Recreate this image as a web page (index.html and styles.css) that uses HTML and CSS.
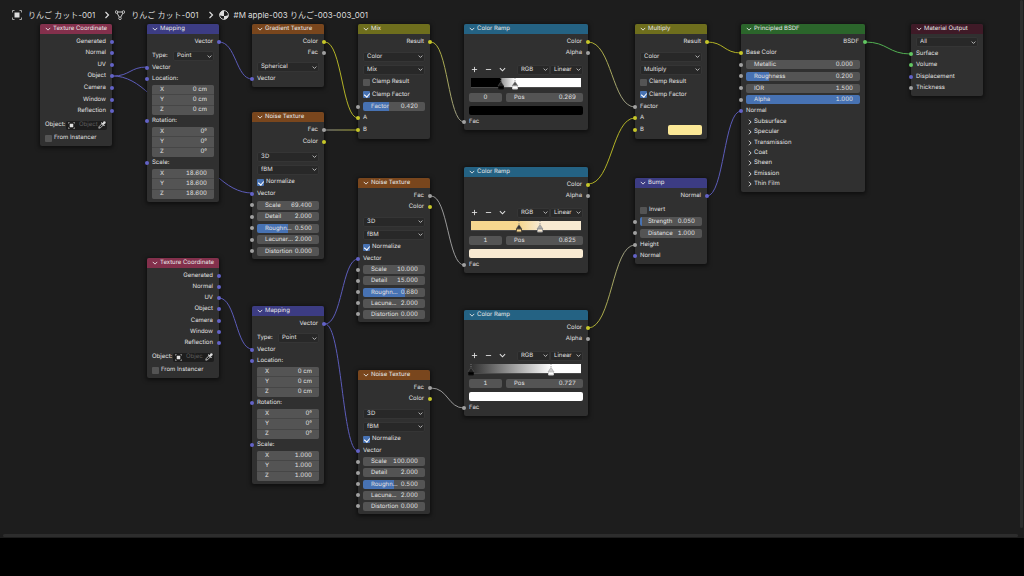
FILE: index.html
```html
<!DOCTYPE html>
<html lang="ja">
<head>
<meta charset="utf-8">
<title>Shader Editor</title>
<link rel="stylesheet" href="styles.css">
</head>
<body>
<svg class="defs" aria-hidden="true">
  <symbol id="down" viewBox="0 0 8 8"><path d="M1 2.5 4 5.5 7 2.5" fill="none" stroke="currentColor" stroke-width="1.2"/></symbol>
  <symbol id="right" viewBox="0 0 8 8"><path d="M2.5 1 5.5 4 2.5 7" fill="none" stroke="currentColor" stroke-width="1.2"/></symbol>
  <symbol id="object" viewBox="0 0 10 10"><path d="M.5 2.5v-2h2M7.5.5h2v2M9.5 7.5v2h-2M2.5 9.5h-2v-2" fill="none" stroke="currentColor" stroke-width="1" opacity=".7"/><rect x="2.5" y="2.5" width="5" height="5" fill="currentColor"/></symbol>
  <symbol id="mesh" viewBox="0 0 10 10"><path d="M1.5 2h7L5 8.500z" fill="none" stroke="currentColor" stroke-width=".9"/><circle cx="1.5" cy="2" r="1.3" fill="#1d1d1d" stroke="currentColor" stroke-width=".8"/><circle cx="8.5" cy="2" r="1.3" fill="#1d1d1d" stroke="currentColor" stroke-width=".8"/><circle cx="5" cy="8.3" r="1.3" fill="#1d1d1d" stroke="currentColor" stroke-width=".8"/></symbol>
  <symbol id="material" viewBox="0 0 10 10"><circle cx="5" cy="5" r="4.4" fill="none" stroke="currentColor" stroke-width=".9"/><path d="M5 .6A4.4 4.4 0 0 0 .6 5c1.200.9 2.700 1.200 4.400 1.100z" fill="currentColor"/><path d="M5 6.100c1.500 0 3.200-.3 4.400-1.100A4.400 4.400 0 0 1 5 9.400z" fill="currentColor"/></symbol>
  <symbol id="dropper" viewBox="0 0 10 10"><path d="M1 9l.6-2.200L5.200 3.200 6.800 4.800 3.200 8.400z" fill="none" stroke="currentColor" stroke-width="1"/><path d="M4.500 2.300l3.200 3.200M6 3.800 8 1.900" stroke="currentColor" stroke-width="1.500" stroke-linecap="round"/><circle cx="8" cy="2" r="1.600" fill="currentColor"/></symbol>
  <symbol id="plus" viewBox="0 0 8 8"><path d="M4 1v6M1 4h6" stroke="currentColor" stroke-width="1"/></symbol>
  <symbol id="minus" viewBox="0 0 8 8"><path d="M1 4h6" stroke="currentColor" stroke-width="1"/></symbol>
  <symbol id="stop" viewBox="0 0 8 12"><path d="M4 0v4" stroke="#888" stroke-width=".8" stroke-dasharray="1 1"/><path d="M4 3.500 7 8H1z" fill="var(--tip)" stroke="#777" stroke-width=".4"/><path d="M1.500 8h5v3h-5z" fill="var(--c)" stroke="var(--edge)" stroke-width="1"/></symbol>
</svg>
<main class="editor">
  <nav class="path">
    <svg class="big"><use href="#object"/></svg><span>りんご カット-001</span>
    <svg class="sep"><use href="#right"/></svg>
    <svg class="big"><use href="#mesh"/></svg><span>りんご カット-001</span>
    <svg class="sep"><use href="#right"/></svg>
    <svg class="big"><use href="#material"/></svg><span>#M apple-003 りんご-003-003_001</span>
  </nav>

  <svg class="links" aria-hidden="true">
    <defs>
      <linearGradient id="ga" gradientUnits="userSpaceOnUse" x1="325" x2="358" y1="0" y2="0"><stop offset="0" stop-color="#999"/><stop offset="1" stop-color="#b3b326"/></linearGradient>
      <linearGradient id="gb" gradientUnits="userSpaceOnUse" x1="431" x2="464" y1="0" y2="0"><stop offset="0" stop-color="#b3b326"/><stop offset="1" stop-color="#999"/></linearGradient>
      <linearGradient id="gc" gradientUnits="userSpaceOnUse" x1="588" x2="635" y1="0" y2="0"><stop offset="0" stop-color="#b3b326"/><stop offset="1" stop-color="#999"/></linearGradient>
    </defs>
    <g class="l-vec">
      <path d="M113 76C130 76 130 67 147 67"/><path d="M113 76C166 76 199 193 252 193"/>
      <path d="M219 42C236 42 236 79 252 79"/><path d="M219 298C236 298 236 349 252 349"/>
      <path d="M325 324C342 324 342 259 358 259"/><path d="M325 324C342 324 342 451 358 451"/>
      <path d="M707 196C724 196 724 111 741 111"/>
    </g>
    <g class="l-col"><path d="M325 42C342 42 342 118 358 118"/><path d="M588 184C612 184 612 118 635 118"/><path d="M707 42C724 42 724 53 741 53"/></g>
    <g class="l-val"><path d="M431 196C448 196 448 265 464 265"/><path d="M431 388C448 388 448 408 464 408"/></g>
    <g class="l-sh"><path d="M865 42C888 42 888 54 911 54"/></g>
    <path d="M325 130H358" stroke="url(#ga)"/><path d="M431 42C448 42 448 122 464 122" stroke="url(#gb)"/>
    <path d="M588 42C612 42 612 107 635 107" stroke="url(#gc)"/><path d="M588 328C612 328 612 245 635 245" stroke="url(#gc)"/>
  </svg>

  <section class="node n-tc1">
    <h2 class="input"><svg><use href="#down"/></svg>Texture Coordinate</h2>
    <div class="rows h81">
      <div class="out vec">Generated</div><div class="out vec">Normal</div><div class="out vec">UV</div><div class="out vec">Object</div><div class="out vec">Camera</div><div class="out vec">Window</div><div class="out vec">Reflection</div>
    </div>
    <label class="line top">Object:<span class="pick"><svg><use href="#object"/></svg><input type="text" placeholder="Object"><svg class="drop"><use href="#dropper"/></svg></span></label>
    <label class="line check gap1"><input type="checkbox">From Instancer</label>
  </section>

  <section class="node n-map1">
    <h2 class="vector"><svg><use href="#down"/></svg>Mapping</h2>
    <div class="line out vec">Vector</div>
    <label class="line top">Type:<span class="select small"><select><option>Point</option></select><svg><use href="#down"/></svg></span></label>
    <div class="line in vec short">Vector</div>
    <div class="line in vec">Location:</div>
    <div class="xyz"><label>X<input type="text" value="0 cm"></label><label>Y<input type="text" value="0 cm"></label><label>Z<input type="text" value="0 cm"></label></div>
    <div class="line in vec">Rotation:</div>
    <div class="xyz"><label>X<input type="text" value="0°"></label><label>Y<input type="text" value="0°"></label><label>Z<input type="text" value="0°"></label></div>
    <div class="line in vec">Scale:</div>
    <div class="xyz last"><label>X<input type="text" value="18.600"></label><label>Y<input type="text" value="18.600"></label><label>Z<input type="text" value="18.600"></label></div>
  </section>

  <section class="node n-grad">
    <h2 class="texture"><svg><use href="#down"/></svg>Gradient Texture</h2>
    <div class="rows h23"><div class="out col">Color</div><div class="out val">Fac</div></div>
    <div class="line top"><span class="select"><select aria-label="Gradient type"><option>Spherical</option></select><svg><use href="#down"/></svg></span></div>
    <div class="line in vec">Vector</div>
  </section>

  <section class="node n-noise1">
    <h2 class="texture"><svg><use href="#down"/></svg>Noise Texture</h2>
    <div class="rows h24"><div class="out val">Fac</div><div class="out col">Color</div></div>
    <div class="rows h26 top">
      <div><span class="select"><select aria-label="Dimensions"><option>3D</option></select><svg><use href="#down"/></svg></span></div>
      <div><span class="select"><select aria-label="Noise type"><option>fBM</option></select><svg><use href="#down"/></svg></span></div>
    </div>
    <label class="line check"><input type="checkbox" checked>Normalize</label>
    <div class="rows h69">
      <div class="in vec">Vector</div>
      <div class="in val"><label class="field">Scale<input type="text" value="69.400"></label></div>
      <div class="in val"><label class="field">Detail<input type="text" value="2.000"></label></div>
      <div class="in val"><label class="field" style="--v:50%">Roughn...<input type="text" value="0.500"></label></div>
      <div class="in val"><label class="field">Lacunar...<input type="text" value="2.000"></label></div>
      <div class="in val"><label class="field">Distortion<input type="text" value="0.000"></label></div>
    </div>
  </section>

  <section class="node n-mix">
    <h2 class="color"><svg><use href="#down"/></svg>Mix</h2>
    <div class="line out col">Result</div>
    <div class="rows h26 top">
      <div><span class="select"><select aria-label="Data type"><option>Color</option></select><svg><use href="#down"/></svg></span></div>
      <div><span class="select"><select aria-label="Blend mode"><option>Mix</option></select><svg><use href="#down"/></svg></span></div>
    </div>
    <div class="rows h25"><label class="check"><input type="checkbox">Clamp Result</label><label class="check"><input type="checkbox" checked>Clamp Factor</label></div>
    <div class="rows h35">
      <div class="in val"><label class="field" style="--v:42%">Factor<input type="text" value="0.420"></label></div>
      <div class="in col">A</div><div class="in col">B</div>
    </div>
  </section>

  <section class="node wide n-ramp1">
    <h2 class="converter"><svg><use href="#down"/></svg>Color Ramp</h2>
    <div class="rows h23"><div class="out col">Color</div><div class="out val">Alpha</div></div>
    <div class="tools">
      <button aria-label="Add stop"><svg><use href="#plus"/></svg></button><button aria-label="Remove stop"><svg><use href="#minus"/></svg></button><button aria-label="Ramp menu"><svg><use href="#down"/></svg></button>
      <span class="select"><select aria-label="Color mode"><option>RGB</option></select><svg><use href="#down"/></svg></span><span class="select"><select aria-label="Interpolation"><option>Linear</option></select><svg><use href="#down"/></svg></span>
    </div>
    <div class="ramp r1"><svg class="stop black" style="left:27%"><use href="#stop"/></svg><svg class="stop white" style="left:40%"><use href="#stop"/></svg></div>
    <div class="pos"><input type="text" aria-label="Active stop" value="0"><label class="field">Pos<input type="text" value="0.269"></label></div>
    <button class="swatch s-black" aria-label="Stop color"></button>
    <div class="line in val gap1">Fac</div>
  </section>

  <section class="node wide n-ramp2">
    <h2 class="converter"><svg><use href="#down"/></svg>Color Ramp</h2>
    <div class="rows h23"><div class="out col">Color</div><div class="out val">Alpha</div></div>
    <div class="tools">
      <button aria-label="Add stop"><svg><use href="#plus"/></svg></button><button aria-label="Remove stop"><svg><use href="#minus"/></svg></button><button aria-label="Ramp menu"><svg><use href="#down"/></svg></button>
      <span class="select"><select aria-label="Color mode"><option>RGB</option></select><svg><use href="#down"/></svg></span><span class="select"><select aria-label="Interpolation"><option>Linear</option></select><svg><use href="#down"/></svg></span>
    </div>
    <div class="ramp r2"><svg class="stop sand" style="left:44%"><use href="#stop"/></svg><svg class="stop cream" style="left:62.5%"><use href="#stop"/></svg></div>
    <div class="pos"><input type="text" aria-label="Active stop" value="1"><label class="field">Pos<input type="text" value="0.625"></label></div>
    <button class="swatch s-cream" aria-label="Stop color"></button>
    <div class="line in val gap1">Fac</div>
  </section>

  <section class="node wide n-ramp3">
    <h2 class="converter"><svg><use href="#down"/></svg>Color Ramp</h2>
    <div class="rows h23"><div class="out col">Color</div><div class="out val">Alpha</div></div>
    <div class="tools">
      <button aria-label="Add stop"><svg><use href="#plus"/></svg></button><button aria-label="Remove stop"><svg><use href="#minus"/></svg></button><button aria-label="Ramp menu"><svg><use href="#down"/></svg></button>
      <span class="select"><select aria-label="Color mode"><option>RGB</option></select><svg><use href="#down"/></svg></span><span class="select"><select aria-label="Interpolation"><option>Linear</option></select><svg><use href="#down"/></svg></span>
    </div>
    <div class="ramp r3"><svg class="stop black" style="left:0%"><use href="#stop"/></svg><svg class="stop white" style="left:72.7%"><use href="#stop"/></svg></div>
    <div class="pos"><input type="text" aria-label="Active stop" value="1"><label class="field">Pos<input type="text" value="0.727"></label></div>
    <button class="swatch s-white" aria-label="Stop color"></button>
    <div class="line in val gap1">Fac</div>
  </section>

  <section class="node n-mult">
    <h2 class="color"><svg><use href="#down"/></svg>Multiply</h2>
    <div class="line out col">Result</div>
    <div class="rows h26 top">
      <div><span class="select"><select aria-label="Data type"><option>Color</option></select><svg><use href="#down"/></svg></span></div>
      <div><span class="select"><select aria-label="Blend mode"><option>Multiply</option></select><svg><use href="#down"/></svg></span></div>
    </div>
    <div class="rows h25"><label class="check"><input type="checkbox">Clamp Result</label><label class="check"><input type="checkbox" checked>Clamp Factor</label></div>
    <div class="rows h35">
      <div class="in val">Factor</div><div class="in col">A</div>
      <div class="in col">B<button class="chip" aria-label="Color B"></button></div>
    </div>
  </section>

  <section class="node n-bump">
    <h2 class="vector"><svg><use href="#down"/></svg>Bump</h2>
    <div class="line out vec">Normal</div>
    <label class="line check top"><input type="checkbox">Invert</label>
    <div class="rows h46">
      <div class="in val"><label class="field" style="--v:4%">Strength<input type="text" value="0.050"></label></div>
      <div class="in val"><label class="field">Distance<input type="text" value="1.000"></label></div>
      <div class="in val">Height</div><div class="in vec">Normal</div>
    </div>
  </section>

  <section class="node wide n-bsdf">
    <h2 class="shader"><svg><use href="#down"/></svg>Principled BSDF</h2>
    <div class="rows h81">
      <div class="out sh">BSDF</div>
      <div class="in col">Base Color</div>
      <div class="in val"><label class="field">Metallic<input type="text" value="0.000"></label></div>
      <div class="in val"><label class="field" style="--v:20%">Roughness<input type="text" value="0.200"></label></div>
      <div class="in val"><label class="field">IOR<input type="text" value="1.500"></label></div>
      <div class="in val"><label class="field" style="--v:100%">Alpha<input type="text" value="1.000"></label></div>
      <div class="in vec">Normal</div>
    </div>
    <div class="rows panels">
      <button><svg><use href="#right"/></svg>Subsurface</button><button><svg><use href="#right"/></svg>Specular</button><button><svg><use href="#right"/></svg>Transmission</button><button><svg><use href="#right"/></svg>Coat</button><button><svg><use href="#right"/></svg>Sheen</button><button><svg><use href="#right"/></svg>Emission</button><button><svg><use href="#right"/></svg>Thin Film</button>
    </div>
  </section>

  <section class="node n-out">
    <h2 class="output"><svg><use href="#down"/></svg>Material Output</h2>
    <div class="line gap1"><span class="select"><select aria-label="Target"><option>All</option></select><svg><use href="#down"/></svg></span></div>
    <div class="rows h46"><div class="in sh">Surface</div><div class="in sh">Volume</div><div class="in vec">Displacement</div><div class="in val">Thickness</div></div>
  </section>

  <section class="node n-tc2">
    <h2 class="input"><svg><use href="#down"/></svg>Texture Coordinate</h2>
    <div class="rows h79">
      <div class="out vec">Generated</div><div class="out vec">Normal</div><div class="out vec">UV</div><div class="out vec">Object</div><div class="out vec">Camera</div><div class="out vec">Window</div><div class="out vec">Reflection</div>
    </div>
    <label class="line top">Object:<span class="pick"><svg><use href="#object"/></svg><input type="text" placeholder="Objec"><svg class="drop"><use href="#dropper"/></svg></span></label>
    <label class="line check gap1"><input type="checkbox">From Instancer</label>
  </section>

  <section class="node n-map2">
    <h2 class="vector"><svg><use href="#down"/></svg>Mapping</h2>
    <div class="line out vec">Vector</div>
    <label class="line top">Type:<span class="select small"><select><option>Point</option></select><svg><use href="#down"/></svg></span></label>
    <div class="line in vec short">Vector</div>
    <div class="line in vec">Location:</div>
    <div class="xyz"><label>X<input type="text" value="0 cm"></label><label>Y<input type="text" value="0 cm"></label><label>Z<input type="text" value="0 cm"></label></div>
    <div class="line in vec">Rotation:</div>
    <div class="xyz"><label>X<input type="text" value="0°"></label><label>Y<input type="text" value="0°"></label><label>Z<input type="text" value="0°"></label></div>
    <div class="line in vec">Scale:</div>
    <div class="xyz last"><label>X<input type="text" value="1.000"></label><label>Y<input type="text" value="1.000"></label><label>Z<input type="text" value="1.000"></label></div>
  </section>

  <section class="node n-noise2">
    <h2 class="texture"><svg><use href="#down"/></svg>Noise Texture</h2>
    <div class="rows h23"><div class="out val">Fac</div><div class="out col">Color</div></div>
    <div class="rows h26 top">
      <div><span class="select"><select aria-label="Dimensions"><option>3D</option></select><svg><use href="#down"/></svg></span></div>
      <div><span class="select"><select aria-label="Noise type"><option>fBM</option></select><svg><use href="#down"/></svg></span></div>
    </div>
    <label class="line check"><input type="checkbox" checked>Normalize</label>
    <div class="rows h67">
      <div class="in vec">Vector</div>
      <div class="in val"><label class="field">Scale<input type="text" value="10.000"></label></div>
      <div class="in val"><label class="field">Detail<input type="text" value="15.000"></label></div>
      <div class="in val"><label class="field" style="--v:67%">Roughn...<input type="text" value="0.680"></label></div>
      <div class="in val"><label class="field">Lacuna...<input type="text" value="2.000"></label></div>
      <div class="in val"><label class="field">Distortion<input type="text" value="0.000"></label></div>
    </div>
  </section>

  <section class="node n-noise3">
    <h2 class="texture"><svg><use href="#down"/></svg>Noise Texture</h2>
    <div class="rows h23"><div class="out val">Fac</div><div class="out col">Color</div></div>
    <div class="rows h26 top">
      <div><span class="select"><select aria-label="Dimensions"><option>3D</option></select><svg><use href="#down"/></svg></span></div>
      <div><span class="select"><select aria-label="Noise type"><option>fBM</option></select><svg><use href="#down"/></svg></span></div>
    </div>
    <label class="line check"><input type="checkbox" checked>Normalize</label>
    <div class="rows h67">
      <div class="in vec">Vector</div>
      <div class="in val"><label class="field">Scale<input type="text" value="100.000"></label></div>
      <div class="in val"><label class="field">Detail<input type="text" value="2.000"></label></div>
      <div class="in val"><label class="field" style="--v:50%">Roughn...<input type="text" value="0.500"></label></div>
      <div class="in val"><label class="field">Lacuna...<input type="text" value="2.000"></label></div>
      <div class="in val"><label class="field">Distortion<input type="text" value="0.000"></label></div>
    </div>
  </section>

  <div class="bar-v"></div>
  <div class="bar-h"></div>
</main>
<footer class="strip"></footer>
</body>
</html>
```
FILE: styles.css
```css
* { box-sizing: border-box; }
body {
  margin: 0; min-height: 100vh; display: flex; flex-direction: column;
  background: #000; color: #e0e0e0;
  font: 6px/10px Inter, "Noto Sans CJK JP", sans-serif;
  font-variant-numeric: tabular-nums;
  text-rendering: geometricPrecision;
}
input, select, button { font: inherit; font-variant-numeric: inherit; text-rendering: inherit; color: inherit; border: 0; padding: 0; margin: 0; background: none; min-width: 0; }
.defs { position: absolute; width: 0; height: 0; }
.editor { position: relative; flex: 1; overflow: hidden; background: #1d1d1d; }
.strip { height: 38px; background: #000; }

.path { display: flex; align-items: center; padding: 8px 12px 0; height: 21px; font-size: 8px; line-height: 12px; font-variant-numeric: normal; text-rendering: auto; color: #dcdcdc; white-space: nowrap; }
.path .big { width: 10px; height: 10px; margin-right: 6px; }
.path .sep { width: 8px; height: 8px; margin: 0 4px 0 8px; }
.path span:last-child { margin-left: -1px; }

.links { position: absolute; inset: 0; width: 100%; height: 100%; }
.links path { fill: none; stroke-width: 1; }
.l-vec { stroke: #5c5cba; }
.l-col { stroke: #b3b326; }
.l-val { stroke: #999; }
.l-sh { stroke: #52b052; }

.node { position: absolute; width: 72px; padding-bottom: 2px; background: #303030; border-radius: 2px; box-shadow: 0 1px 4px 1px rgba(0, 0, 0, .55); white-space: nowrap; }
.node.wide { width: 124px; }
.node h2 { display: flex; align-items: center; gap: 2px; height: 10px; margin: 0 0 2px; padding-left: 5px; font-size: 6px; font-weight: 400; line-height: 10px; color: #e8e8e8; border-radius: 2px 2px 0 0; }
.node svg { width: 6px; height: 6px; flex: none; }
.input { background: #83304c; }
.vector { background: #3c3c83; }
.texture { background: #79461d; }
.color { background: #6e6e1d; }
.converter { background: #246283; }
.shader { background: #2b652b; }
.output { background: #3f1a27; }

.n-tc1 { left: 40px; top: 24px; }
.n-map1 { left: 147px; top: 24px; }
.n-grad { left: 252px; top: 24px; }
.n-noise1 { left: 252px; top: 112px; }
.n-mix { left: 358px; top: 24px; }
.n-ramp1 { left: 464px; top: 24px; }
.n-ramp2 { left: 464px; top: 167px; }
.n-ramp3 { left: 464px; top: 310px; }
.n-mult { left: 635px; top: 24px; }
.n-bump { left: 635px; top: 178px; }
.n-bsdf { left: 741px; top: 24px; }
.n-out { left: 911px; top: 24px; }
.n-tc2 { left: 147px; top: 258px; }
.n-map2 { left: 252px; top: 306px; }
.n-noise2 { left: 358px; top: 178px; }
.n-noise3 { left: 358px; top: 370px; }

.rows { display: grid; grid-auto-rows: 1fr; }
.rows > * { display: flex; align-items: center; padding: 0 5px; min-height: 0; }
.h23 { height: 23px; } .h24 { height: 24px; } .h25 { height: 25px; } .h26 { height: 26px; }
.h35 { height: 35px; } .h46 { height: 46px; } .h67 { height: 67px; } .h69 { height: 69px; }
.h79 { height: 79px; } .h81 { height: 81px; }
.line { display: flex; align-items: center; height: 12px; padding: 0 5px; }
.line.short { height: 11px; }
.top { margin-top: 2px; }
.gap1 { margin-top: 1px; }
.n-mix, .n-mult { padding-bottom: 3px; }

.in, .out { position: relative; }
.rows > .out, .out { justify-content: flex-end; padding-right: 6px; }
.in::before, .out::after { content: ""; position: absolute; top: 50%; width: 4px; height: 4px; margin-top: -2px; border-radius: 50%; background: var(--dot); }
.in::before { left: -2px; }
.out::after { right: -2px; }
.vec { --dot: #6363c7; }
.col { --dot: #c7c729; }
.val { --dot: #a1a1a1; }
.sh { --dot: #63c763; }

.select { display: flex; align-items: center; flex: 1; min-width: 0; height: 10px; padding-right: 1px; background: #282828; border: 1px solid #353535; border-radius: 2px; }
.select select { appearance: none; flex: 1; width: 100%; height: 8px; padding-left: 3px; line-height: 8px; }
.node .select svg { width: 5px; height: 5px; }
.select.small { flex: none; width: 41px; margin-left: auto; }

.check { gap: 2px; }
.check input { appearance: none; width: 7px; height: 7px; border-radius: 1px; background: #545454; }
.check input:checked { background: #4772b3; position: relative; }
.check input:checked::after { content: ""; position: absolute; left: 2px; top: 1px; width: 3px; height: 4px; border: solid #fff; border-width: 0 1px 1px 0; transform: rotate(40deg); }

.field { --v: 0%; display: flex; align-items: center; justify-content: space-between; flex: 1; min-width: 0; height: 9px; padding: 0 7px 0 8px; border-radius: 2px; line-height: 9px; background: linear-gradient(90deg, #4772b3 var(--v), #545454 var(--v)); }
.field input { width: 0; flex: 1; height: 9px; text-align: right; }

.xyz { display: grid; gap: 1px; height: 30px; grid-auto-rows: 1fr; margin: 0 5px; border-radius: 2px; overflow: hidden; background: #464646; }
.xyz.last { margin-bottom: 1px; }
.xyz label { display: flex; align-items: center; padding: 0 7px 1px 8px; background: #545454; line-height: 9px; min-height: 0; }
.xyz input { flex: 1; width: 0; height: 9px; text-align: right; }

.pick { display: flex; align-items: center; gap: 4px; width: 41px; height: 9px; margin-left: auto; padding: 0 1px 0 2px; background: #1d1d1d; border-radius: 2px; }
.node .pick svg { width: 7px; height: 7px; }
.pick input { flex: 1; width: 0; height: 9px; }
.pick input::placeholder { color: #5c5c5c; opacity: 1; }
.node .pick .drop { width: 8px; height: 8px; margin-left: -5px; }

.tools { display: flex; align-items: center; height: 11px; margin-top: 5px; padding: 0 5px 0 7px; }
.tools button { width: 14px; height: 10px; display: flex; align-items: center; }
.node .tools button svg { width: 7px; height: 7px; }
.tools button:nth-of-type(3) { width: 18px; }
.ramp { position: relative; height: 10px; margin: 3px 7px 0; border: solid #4a4a4a; border-width: 0 0 1px; }
.r1 { background: linear-gradient(90deg, #000 27%, #999 28%, #fff 40%); }
.r2 { background: linear-gradient(90deg, #f6d78f 44%, #f8ead2 63%); }
.r3 { background: linear-gradient(90deg, #303030, #fff 73%); }
.node .stop { position: absolute; top: 0; width: 8px; height: 12px; margin-left: -4px; }
.black { --c: #000; --tip: #222; --edge: #111; }
.white { --c: #fff; --tip: #555; --edge: #ccc; }
.sand { --c: #f6d78f; --tip: #333; --edge: #554a38; }
.cream { --c: #f8ead2; --tip: #aaa; --edge: #999; }
.r3 .white { --tip: #ccc; }
.pos { display: flex; gap: 4px; margin: 5px 5px 0; height: 9px; align-items: center; }
.pos > input { width: 33px; height: 9px; text-align: center; background: #545454; border-radius: 2px; }
.swatch { display: block; height: 9px; margin: 4px 5px 0; width: calc(100% - 10px); border-radius: 2px; }
.s-black { background: #000; }
.s-cream { background: #f8ead2; }
.s-white { background: #fff; }
.chip { width: 34px; height: 10px; margin-left: auto; border-radius: 2px; background: #fbe896; }

.panels { height: 72px; margin-bottom: 1px; }
.panels button { gap: 1px; padding-left: 6px; }

.bar-v { position: absolute; right: 1px; top: 0; bottom: 10px; width: 3px; border-radius: 2px; background: #2d2d2d; }
.bar-h { position: absolute; left: 3px; right: 6px; bottom: 1px; height: 3px; border-radius: 2px; background: #2d2d2d; }
```
